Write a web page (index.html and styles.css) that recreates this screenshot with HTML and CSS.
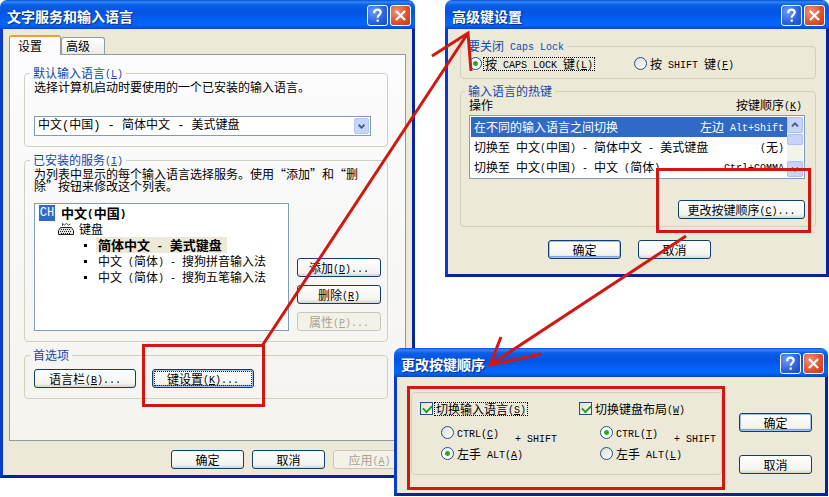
FILE: index.html
```html
<!DOCTYPE html>
<html lang="zh-CN">

<head>
    <meta charset="UTF-8">
    <meta name="viewport" content="width=device-width, initial-scale=1.0">
    <title>文字服务和输入语言</title>
    <link rel="stylesheet" href="styles.css">
</head>

<body>
    <main class="desktop">

        <!-- text services -->
        <section class="window window-services">
            <header class="titlebar">
                <h2>文字服务和输入语言</h2>
                <button class="tb-btn" type="button" aria-label="帮助"><svg viewBox="0 0 21 21"><path d="M7 8V7q0-3 3.500-3t3.500 3q0 1.500-1.500 2.700Q10.700 11 10.700 13M10.700 15v2.500" /></svg></button>
                <button class="tb-btn tb-close" type="button" aria-label="关闭"><svg viewBox="0 0 21 21"><path d="M5.500 5.500l10 10M15.500 5.500l-10 10" /></svg></button>
            </header>
            <div class="window-body services-body">
                <div class="tabs">
                    <button class="tab active" type="button">设置</button>
                    <button class="tab" type="button">高级</button>
                </div>
                <div class="panel">
                    <fieldset class="group group-default">
                        <legend><label for="lang">默认输入语言<span class="en">(<u>L</u>)</span></label></legend>
                        <p>选择计算机启动时要使用的一个已安装的输入语言。</p>
                        <div class="combo">
                            <button type="button" class="combo-arrow" tabindex="-1" aria-label="展开"><svg viewBox="0 0 15 17"><path d="M4 7l3.500 3.500L11 7" /></svg></button>
                            <select id="lang">
                                <option>中文(中国) - 简体中文 - 美式键盘</option>
                            </select>
                        </div>
                    </fieldset>

                    <fieldset class="group group-installed">
                        <legend>已安装的服务<span class="en">(<u>I</u>)</span></legend>
                        <p>为列表中显示的每个输入语言选择服务。使用“添加”和“删除”按钮来修改这个列表。</p>
                        <div class="installed">
                            <ul class="tree">
                                <li class="tree-lang"><span class="ch">CH</span><b>中文<span class="en">(</span>中国<span class="en">)</span></b></li>
                                <li class="tree-kind">
                                    <svg class="keyboard" viewBox="0 0 16 14"><path class="cord" d="M4.500 4V1.500L6.500 3l2-1.500 2 1.500 2-1" /><path class="case" d="M2.500 5.500h11l2 3v4h-15v-4z" /><path class="keys" d="M3 7.500h10M2 9.500h12M3 11.500h10" /></svg>键盘
                                </li>
                                <li class="tree-item selected"><b>简体中文<span class="en"> - </span>美式键盘</b></li>
                                <li class="tree-item"><span>中文<span class="en"> (</span>简体<span class="en">) - </span>搜狗拼音输入法</span></li>
                                <li class="tree-item"><span>中文<span class="en"> (</span>简体<span class="en">) - </span>搜狗五笔输入法</span></li>
                            </ul>
                            <div class="installed-btns">
                                <button class="btn" type="button">添加<span class="en">(<u>D</u>)...</span></button>
                                <button class="btn" type="button">删除<span class="en">(<u>R</u>)</span></button>
                                <button class="btn" type="button" disabled>属性<span class="en">(<u>P</u>)...</span></button>
                            </div>
                        </div>
                    </fieldset>

                    <fieldset class="group group-prefs">
                        <legend>首选项</legend>
                        <div class="prefs">
                            <button class="btn btn-wide" type="button">语言栏<span class="en">(<u>B</u>)...</span></button>
                            <button class="btn btn-wide default focused" type="button">键设置<span class="en">(<u>K</u>)...</span></button>
                        </div>
                    </fieldset>
                </div>
                <footer class="services-footer">
                    <button class="btn" type="button">确定</button>
                    <button class="btn" type="button">取消</button>
                    <button class="btn" type="button" disabled>应用<span class="en">(<u>A</u>)</span></button>
                </footer>
            </div>
        </section>

        <!-- advanced key settings -->
        <section class="window window-keys">
            <header class="titlebar">
                <h2>高级键设置</h2>
                <button class="tb-btn" type="button" aria-label="帮助"><svg viewBox="0 0 21 21"><path d="M7 8V7q0-3 3.500-3t3.500 3q0 1.500-1.500 2.700Q10.700 11 10.700 13M10.700 15v2.500" /></svg></button>
                <button class="tb-btn tb-close" type="button" aria-label="关闭"><svg viewBox="0 0 21 21"><path d="M5.500 5.500l10 10M15.500 5.500l-10 10" /></svg></button>
            </header>
            <div class="window-body keys-body">
                <fieldset class="group group-caps">
                    <legend>要关闭<span class="en"> Caps Lock</span></legend>
                    <div class="caps">
                        <div class="option">
                            <input type="radio" name="caps" id="caps-lock" checked>
                            <label for="caps-lock" class="focused">按<span class="en"> CAPS LOCK </span>键<span class="en">(<u>L</u>)</span></label>
                        </div>
                        <div class="option">
                            <input type="radio" name="caps" id="caps-shift">
                            <label for="caps-shift">按<span class="en"> SHIFT </span>键<span class="en">(<u>F</u>)</span></label>
                        </div>
                    </div>
                </fieldset>

                <fieldset class="group group-hotkeys">
                    <legend>输入语言的热键</legend>
                    <div class="list-head">
                        <span>操作</span>
                        <span>按键顺序<span class="en">(<u>K</u>)</span></span>
                    </div>
                    <div class="list">
                        <table>
                            <tbody>
                                <tr class="selected">
                                    <td>在不同的输入语言之间切换</td>
                                    <td>左边<span class="en"> Alt+Shift</span></td>
                                </tr>
                                <tr>
                                    <td>切换至<span class="en"> </span>中文<span class="en">(</span>中国<span class="en">) - </span>简体中文<span class="en"> - </span>美式键盘</td>
                                    <td><span class="en">(</span>无<span class="en">)</span></td>
                                </tr>
                                <tr>
                                    <td>切换至<span class="en"> </span>中文<span class="en">(</span>中国<span class="en">) - </span>中文<span class="en"> (</span>简体<span class="en">) -</span></td>
                                    <td><span class="en">Ctrl+COMMA</span></td>
                                </tr>
                            </tbody>
                        </table>
                        <div class="scrollbar">
                            <button type="button" aria-label="向上"><svg viewBox="0 0 16 16"><path d="M4.500 9.500L8 6l3.500 3.500" /></svg></button>
                            <div class="thumb"></div>
                            <button type="button" class="scroll-down" aria-label="向下"><svg viewBox="0 0 16 16"><path d="M4.500 6.500L8 10l3.500-3.500" /></svg></button>
                        </div>
                    </div>
                    <div class="change">
                        <button class="btn btn-change" type="button">更改按键顺序<span class="en">(<u>C</u>)...</span></button>
                    </div>
                </fieldset>
                <footer class="keys-footer">
                    <button class="btn default" type="button">确定</button>
                    <button class="btn" type="button">取消</button>
                </footer>
            </div>
        </section>

        <!-- change key sequence -->
        <section class="window window-sequence">
            <header class="titlebar">
                <h2>更改按键顺序</h2>
                <button class="tb-btn" type="button" aria-label="帮助"><svg viewBox="0 0 21 21"><path d="M7 8V7q0-3 3.500-3t3.500 3q0 1.500-1.500 2.700Q10.700 11 10.700 13M10.700 15v2.500" /></svg></button>
                <button class="tb-btn tb-close" type="button" aria-label="关闭"><svg viewBox="0 0 21 21"><path d="M5.500 5.500l10 10M15.500 5.500l-10 10" /></svg></button>
            </header>
            <div class="window-body sequence-body">
                <fieldset class="group group-sequence">
                    <div class="switch">
                        <div class="option">
                            <input type="checkbox" id="sw-lang" checked>
                            <label for="sw-lang" class="focused">切换输入语言<span class="en">(<u>S</u>)</span></label>
                        </div>
                        <div class="switch-keys">
                            <div class="radios">
                                <div class="option">
                                    <input type="radio" name="lang-key" id="lang-ctrl">
                                    <label for="lang-ctrl"><span class="en">CTRL(<u>C</u>)</span></label>
                                </div>
                                <div class="option">
                                    <input type="radio" name="lang-key" id="lang-alt" checked>
                                    <label for="lang-alt">左手<span class="en"> ALT(<u>A</u>)</span></label>
                                </div>
                            </div>
                            <span class="en plus">+ SHIFT</span>
                        </div>
                    </div>
                    <div class="switch">
                        <div class="option">
                            <input type="checkbox" id="sw-layout" checked>
                            <label for="sw-layout">切换键盘布局<span class="en">(<u>W</u>)</span></label>
                        </div>
                        <div class="switch-keys">
                            <div class="radios">
                                <div class="option">
                                    <input type="radio" name="layout-key" id="layout-ctrl" checked>
                                    <label for="layout-ctrl"><span class="en">CTRL(<u>T</u>)</span></label>
                                </div>
                                <div class="option">
                                    <input type="radio" name="layout-key" id="layout-alt">
                                    <label for="layout-alt">左手<span class="en"> ALT(<u>L</u>)</span></label>
                                </div>
                            </div>
                            <span class="en plus">+ SHIFT</span>
                        </div>
                    </div>
                </fieldset>
                <div class="sequence-btns">
                    <button class="btn default" type="button">确定</button>
                    <button class="btn" type="button">取消</button>
                </div>
            </div>
        </section>

        <!-- red marks over the dialogs -->
        <svg class="marks" width="829" height="497" viewBox="0 0 829 497">
            <rect x="143.500" y="345.500" width="120" height="60" />
            <rect x="657.500" y="169.500" width="152" height="62" />
            <rect x="408.500" y="387.500" width="315" height="101" />
            <path d="M262 346L468 33M432 56L468 33L471 71" />
            <path d="M686 236L490 365M501 337L490 365L541 354" />
        </svg>
    </main>
</body>

</html>
```
FILE: styles.css
```css
* {
    box-sizing: border-box;
}

body {
    margin: 0;
    background-color: #fff;
    color: #000;
    font-family: "Noto Sans CJK SC", sans-serif;
    font-size: 12px;
    line-height: 12px;
}

button,
select,
input {
    margin: 0;
    padding: 0;
    font: inherit;
    color: inherit;
}

h2,
p,
ul {
    margin: 0;
    padding: 0;
}

/* latin letters are half as wide as the chinese ones */
.en {
    font-family: "Liberation Mono", monospace;
    font-size: 10px;
    line-height: 0;
    vertical-align: 1px;
    white-space: pre;
}

b .en {
    font-size: 11px;
}

.desktop {
    position: relative;
    min-height: 497px;
    overflow: hidden;
}

/* windows */
.window {
    position: absolute;
    border-radius: 7px 7px 0 0;
    overflow: hidden;
}

.window-services {
    left: 0;
    top: 0;
    width: 415px;
}

.window-keys {
    left: 445px;
    top: 0;
    width: 384px;
}

.window-sequence {
    left: 394px;
    top: 348px;
    width: 434px;
}

.titlebar {
    display: flex;
    align-items: center;
    gap: 2px;
    height: 29px;
    padding: 2px 4px 0 7px;
    background: linear-gradient(#0a4fd0 0, #2f86f8 2px, #0a5ee8 5px, #0353e2 12px, #0461f8 20px, #0266fc 25px, #0146c8 29px);
}

.titlebar h2 {
    flex: 1;
    color: #fff;
    font-size: 14px;
    line-height: 18px;
    font-weight: bold;
    text-shadow: 1px 1px 1px #0a2a7c;
}

.tb-btn {
    width: 21px;
    height: 21px;
    border: 1px solid #fff;
    border-radius: 3px;
    background: radial-gradient(circle at 30% 30%, #6e9cf4, #2a5fdc 60%, #1a49c0);
}

.tb-close {
    background: radial-gradient(circle at 30% 30%, #f0917a, #dc4f2c 60%, #c03a18);
}

.tb-btn svg {
    display: block;
    width: 19px;
    height: 19px;
    fill: none;
    stroke: #fff;
    stroke-width: 2.4;
}

.window-body {
    border: 3px solid #0a3ccb;
    border-top: 0;
    border-right-color: #0524a0;
    border-bottom-color: #0524a0;
    background-color: #ece9d8;
}

/* buttons */
.btn {
    width: 73px;
    height: 19px;
    border: 1px solid #0f3f6c;
    border-radius: 3px;
    background: linear-gradient(#fff, #f3f3ee 80%, #d8d3c6);
    line-height: 15px;
    white-space: nowrap;
}

.btn.default {
    box-shadow: inset 0 0 0 1px #a5c0ee, inset 0 -2px 0 #7fa3e2;
}

.btn.focused {
    outline: 1px dotted #222;
    outline-offset: -3px;
}

.btn:disabled {
    border-color: #c9c7ba;
    background: #f4f2e8;
    color: #a5a393;
}

.btn-wide {
    width: 102px;
}

.btn-change {
    width: 127px;
}

/* group boxes */
.group {
    min-width: 0;
    margin: 0;
    padding: 2px 6px 10px 9px;
    border: 1px solid #d0d0bf;
    border-radius: 4px;
}

.group legend {
    margin-left: -4px;
    padding: 0 3px;
    color: #1048b0;
}

.group p {
    padding-right: 16px;
}

.option {
    display: flex;
    align-items: center;
    gap: 2px;
    height: 13px;
}

.option label {
    padding: 0 1px;
    white-space: nowrap;
}

.option label.focused {
    outline: 1px dotted #000;
}

input[type="radio"],
input[type="checkbox"] {
    appearance: none;
    flex: none;
    width: 13px;
    height: 13px;
    border: 1px solid #1d5281;
    background: linear-gradient(135deg, #dcdcd7, #fff);
}

input[type="radio"] {
    border-radius: 50%;
}

input[type="radio"]:checked {
    background: radial-gradient(circle, #22a022 0, #2fae2f 2px, #fff 3px);
}

input[type="checkbox"]:checked::before {
    content: "";
    display: block;
    width: 7px;
    height: 4px;
    margin: 2px 0 0 2px;
    border: solid #21a121;
    border-width: 0 0 2px 2px;
    transform: rotate(-45deg);
}

/* services dialog */
.services-body {
    padding: 6px 6px 6px;
}

.tabs {
    display: flex;
    align-items: flex-end;
    height: 19px;
}

.tab {
    width: 44px;
    height: 17px;
    padding-right: 10px;
    border: 1px solid #919b9c;
    border-bottom: 0;
    border-radius: 3px 3px 0 0;
    background: linear-gradient(#fff, #ecebe6);
}

.tab.active {
    position: relative;
    width: 52px;
    height: 20px;
    margin-bottom: -1px;
    border-top: 2px solid #f0a030;
    background: #fcfcfe;
}

.panel {
    display: flex;
    flex-direction: column;
    gap: 7px;
    padding: 12px 17px 41px 14px;
    border: 1px solid #919b9c;
    background: linear-gradient(#fcfcfe, #f4f3ee);
}

.combo {
    position: relative;
    height: 20px;
    margin: 23px 10px 0 0;
}

.combo select {
    appearance: none;
    width: 100%;
    height: 20px;
    padding: 0 20px 0 3px;
    border: 1px solid #7f9db9;
    border-radius: 0;
    background-color: #fff;
    font-family: "Liberation Mono", "Noto Sans CJK SC", monospace;
    line-height: 18px;
}

.combo-arrow {
    position: absolute;
    right: 2px;
    top: 2px;
    width: 15px;
    height: 16px;
    border: 1px solid #b4c8f4;
    border-radius: 2px;
    background: #c6d6fb;
}

.combo-arrow svg,
.scrollbar svg {
    display: block;
    width: 100%;
    height: 100%;
    fill: none;
    stroke: #3f5a8c;
    stroke-width: 2.2;
}

.installed {
    display: flex;
    justify-content: space-between;
    margin-top: 11px;
}

.tree {
    width: 255px;
    height: 128px;
    padding: 1px 4px;
    border: 1px solid #7f9db9;
    background-color: #fff;
    list-style: none;
}

.tree li {
    display: flex;
    align-items: center;
    height: 16px;
}

.tree b {
    font-size: 13px;
}

.ch {
    width: 16px;
    height: 16px;
    margin-right: 6px;
    background-color: #316ac5;
    color: #fff;
    font-family: "Liberation Mono", monospace;
    line-height: 16px;
    text-align: center;
}

.tree .tree-kind {
    padding-left: 19px;
}

.keyboard {
    width: 16px;
    height: 14px;
    margin-right: 5px;
    fill: none;
    stroke: #222;
}

.keyboard .cord {
    stroke-width: 0.8;
}

.keyboard .case {
    fill: #e4e4dc;
}

.keyboard .keys {
    stroke-dasharray: 1 1;
}

.tree .tree-item {
    padding-left: 45px;
}

.tree-item::before {
    content: "";
    width: 3px;
    height: 3px;
    margin-right: 9px;
    background-color: #000;
}

.tree-item > * {
    padding: 2px;
}

.tree-item.selected b {
    padding-right: 5px;
    background-color: #ece9d8;
}

.installed-btns {
    display: flex;
    flex-direction: column;
    justify-content: flex-end;
    gap: 8px;
}

.installed-btns .btn {
    width: 84px;
}

.group-prefs {
    padding-top: 8px;
}

.prefs {
    display: flex;
    gap: 16px;
}

.services-footer {
    display: flex;
    justify-content: flex-end;
    gap: 8px;
    padding-top: 9px;
}

/* key settings dialog */
.keys-body {
    padding: 11px 10px 15px 12px;
}

.group-caps {
    margin-bottom: 6px;
    padding: 5px 8px 8px;
}

.caps {
    display: grid;
    grid-template-columns: 165px 1fr;
}

.group-hotkeys {
    padding: 2px 10px 7px 8px;
}

.list-head {
    display: flex;
    justify-content: space-between;
    padding-right: 3px;
}

.list {
    display: flex;
    height: 64px;
    margin-top: 4px;
    padding: 1px;
    border: 1px solid #7f9db9;
    background-color: #fff;
    overflow: hidden;
}

/* rows are flex so a long action can run under a short key name */
.list table,
.list tbody {
    display: block;
    flex: 1;
    min-width: 0;
}

.list tr {
    display: flex;
    align-items: center;
    justify-content: space-between;
    height: 20px;
}

.list td {
    padding: 0 3px;
    white-space: nowrap;
}

.list .selected {
    background-color: #316ac5;
    color: #fff;
}

.scrollbar {
    display: flex;
    flex: none;
    flex-direction: column;
    width: 16px;
    background-color: #f3f3ee;
}

.scrollbar button,
.thumb {
    height: 16px;
    border: 1px solid #aebff0;
    border-radius: 2px;
    background-color: #c6d4fb;
}

.thumb {
    height: 11px;
    margin-top: 1px;
}

.scrollbar .scroll-down {
    margin-top: auto;
}

.change {
    display: flex;
    justify-content: flex-end;
    margin-top: 21px;
}

.keys-footer {
    display: flex;
    gap: 17px;
    padding: 13px 0 0 88px;
}

/* key sequence dialog */
.sequence-body {
    display: flex;
    gap: 17px;
    padding: 15px 13px 18px 14px;
}

.group-sequence {
    display: flex;
    flex: 1;
    padding: 9px 0 14px 8px;
}

.switch {
    width: 159px;
    flex: none;
}

.switch-keys {
    display: flex;
    margin-top: 11px;
    padding-left: 21px;
}

.radios {
    display: flex;
    flex-direction: column;
    gap: 8px;
    width: 74px;
    flex: none;
}

/* sits between the two radio rows */
.plus {
    line-height: 28px;
}

.sequence-btns {
    display: flex;
    flex-direction: column;
    gap: 23px;
    padding-top: 21px;
}

.marks {
    position: absolute;
    left: 0;
    top: 0;
    fill: none;
    stroke: #d01810;
    stroke-width: 3;
    pointer-events: none;
}
```
